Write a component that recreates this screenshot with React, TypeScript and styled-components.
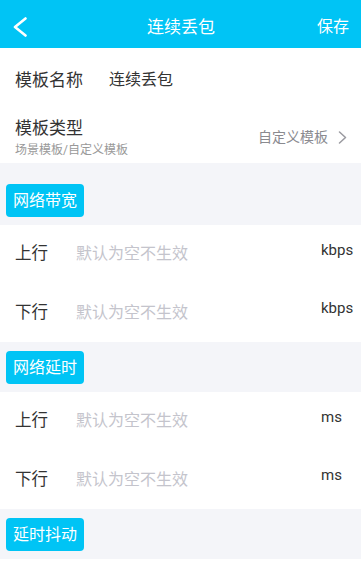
import React from "react";
import styled, { createGlobalStyle } from "styled-components";

const GlobalStyle = createGlobalStyle`
  html, body {
    margin: 0;
    padding: 0;
    background: #f4f5f9;
    font-family: Roboto, "Noto Sans CJK SC", sans-serif;
    color: #333333;
  }
  * {
    box-sizing: border-box;
  }
`;

const Page = styled.div`
  display: flex;
  flex-direction: column;
  width: 100%;
`;

const Header = styled.div`
  display: grid;
  grid-template-columns: 1fr auto 1fr;
  align-items: center;
  height: 48px;
  padding: 6px 12px 0 13px;
  background: #00c4f5;
  color: #ffffff;
`;

const BackButton = styled.div`
  display: flex;
  align-items: center;
  justify-self: start;
  width: 20px;
  height: 22px;
`;

const Title = styled.div`
  font-size: 17px;
  line-height: 22px;
`;

const SaveButton = styled.div`
  justify-self: end;
  font-size: 16px;
  line-height: 22px;
`;

const Card = styled.div<{ $minHeight?: number }>`
  display: flex;
  flex-direction: column;
  min-height: ${(p) => p.$minHeight ?? 0}px;
  background: #ffffff;
`;

const NameRow = styled.div`
  display: flex;
  align-items: center;
  height: 63px;
  padding: 0 15px;
`;

const FieldLabel = styled.div`
  width: 94px;
  font-size: 17px;
  line-height: 22px;
  color: #333333;
`;

const FieldValue = styled.div`
  font-size: 16px;
  line-height: 22px;
  color: #333333;
`;

const TypeRow = styled.div`
  display: flex;
  align-items: center;
  justify-content: space-between;
  height: 52px;
  padding: 0 14px 0 15px;
`;

const TypeText = styled.div`
  display: flex;
  flex-direction: column;
  gap: 5px;
`;

const TypeTitle = styled.div`
  font-size: 17px;
  line-height: 20px;
  color: #333333;
`;

const TypeHint = styled.div`
  font-size: 12px;
  line-height: 14px;
  color: #999999;
`;

const TypeValue = styled.div`
  display: flex;
  align-items: center;
  gap: 10px;
  font-size: 14px;
  line-height: 20px;
  color: #8a8a8f;
`;

const Spacer = styled.div`
  height: 12px;
`;

const SectionHead = styled.div`
  display: flex;
  padding: 9px 6px 8px;
`;

const Tag = styled.div`
  height: 33px;
  padding: 0 7px;
  border-radius: 4px;
  background: #00c4f5;
  color: #ffffff;
  font-size: 16px;
  line-height: 33px;
`;

const InputRow = styled.div`
  display: flex;
  align-items: center;
  height: 58.5px;
  padding-left: 15px;
`;

const InputLabel = styled.div`
  width: 61px;
  font-size: 16.5px;
  line-height: 22px;
  color: #333333;
`;

const Placeholder = styled.div`
  flex: 1;
  font-size: 16px;
  line-height: 22px;
  color: #c4c4cc;
`;

const Unit = styled.div`
  width: 40px;
  margin-bottom: 9px;
  font-size: 15px;
  line-height: 20px;
  color: #333333;
`;

const ChevronLeft = () => (
  <svg width="14" height="20" viewBox="0 0 14 20" fill="none">
    <polyline
      points="12.5,1.5 2,10 12.5,18.5"
      stroke="#ffffff"
      strokeWidth="2.6"
      strokeLinecap="round"
      strokeLinejoin="round"
    />
  </svg>
);

const ChevronRight = () => (
  <svg width="9" height="13" viewBox="0 0 9 13" fill="none">
    <polyline
      points="1.5,1 7.5,6.5 1.5,12"
      stroke="#9a9aa0"
      strokeWidth="1.5"
      strokeLinecap="round"
      strokeLinejoin="round"
    />
  </svg>
);

const sections = [
  { title: "网络带宽", unit: "kbps", rows: ["上行", "下行"] },
  { title: "网络延时", unit: "ms", rows: ["上行", "下行"] },
  { title: "延时抖动", unit: "ms", rows: [] as string[] },
];

export default function App() {
  return (
    <Page>
      <GlobalStyle />
      <Header>
        <BackButton>
          <ChevronLeft />
        </BackButton>
        <Title>连续丢包</Title>
        <SaveButton>保存</SaveButton>
      </Header>

      <Card>
        <NameRow>
          <FieldLabel>模板名称</FieldLabel>
          <FieldValue>连续丢包</FieldValue>
        </NameRow>
        <TypeRow>
          <TypeText>
            <TypeTitle>模板类型</TypeTitle>
            <TypeHint>场景模板/自定义模板</TypeHint>
          </TypeText>
          <TypeValue>
            自定义模板
            <ChevronRight />
          </TypeValue>
        </TypeRow>
      </Card>

      <Spacer />

      {sections.map((section) => (
        <React.Fragment key={section.title}>
          <SectionHead>
            <Tag>{section.title}</Tag>
          </SectionHead>
          <Card $minHeight={14}>
            {section.rows.map((dir) => (
              <InputRow key={dir}>
                <InputLabel>{dir}</InputLabel>
                <Placeholder>默认为空不生效</Placeholder>
                <Unit>{section.unit}</Unit>
              </InputRow>
            ))}
          </Card>
        </React.Fragment>
      ))}
    </Page>
  );
}
